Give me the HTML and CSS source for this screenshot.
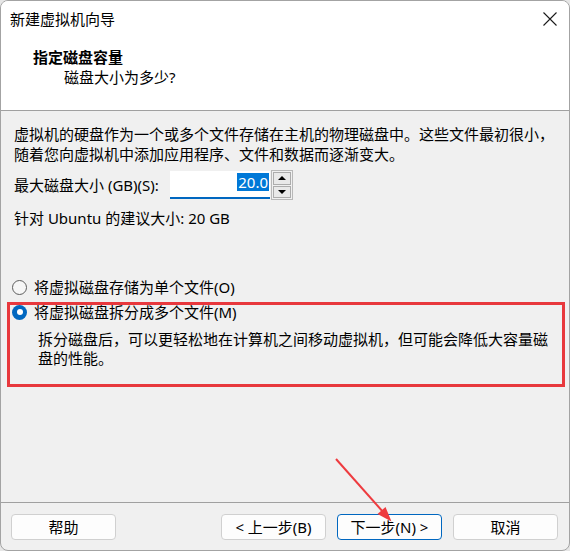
FILE: index.html
```html
<!DOCTYPE html>
<html lang="zh-CN">
<head>
<meta charset="utf-8">
<title>新建虚拟机向导</title>
<link rel="stylesheet" href="styles.css">
</head>
<body>
<div class="window">
  <div class="titlebar">
    <span class="title">新建虚拟机向导</span>
    <span class="close" aria-label="关闭">
      <svg width="16" height="16" viewBox="0 0 16 16"><path d="M1.5 1.5 L14.5 14.5 M14.5 1.5 L1.5 14.5" stroke="#1b1b1b" stroke-width="1.1" fill="none"/></svg>
    </span>
  </div>
  <div class="header">
    <div class="h-title">指定磁盘容量</div>
    <div class="h-sub">磁盘大小为多少?</div>
  </div>
  <div class="content">
    <p class="intro">
      <span>虚拟机的硬盘作为一个或多个文件存储在主机的物理磁盘中。这些文件最初很小，</span>
      <span>随着您向虚拟机中添加应用程序、文件和数据而逐渐变大。</span>
    </p>
    <div class="size-row">
      <span class="size-label">最大磁盘大小 (GB)(S):</span>
      <div class="field"><span class="sel">20.0</span></div>
      <div class="spinner">
        <span class="spin-btn"><span class="tri-up"></span></span>
        <span class="spin-btn"><span class="tri-down"></span></span>
      </div>
    </div>
    <p class="hint">针对 Ubuntu 的建议大小: 20 GB</p>
    <div class="options">
      <div class="option"><span class="radio"></span><span>将虚拟磁盘存储为单个文件(O)</span></div>
      <div class="option option-second"><span class="radio checked"></span><span>将虚拟磁盘拆分成多个文件(M)</span></div>
      <p class="option-desc">
        <span>拆分磁盘后，可以更轻松地在计算机之间移动虚拟机，但可能会降低大容量磁</span>
        <span>盘的性能。</span>
      </p>
    </div>
  </div>
  <div class="footer">
    <button class="btn">帮助</button>
    <div class="nav">
      <button class="btn">&lt; 上一步(B)</button>
      <button class="btn btn-default">下一步(N) &gt;</button>
      <button class="btn">取消</button>
    </div>
  </div>
  <div class="annot-box"></div>
  <svg class="annot-arrow" width="570" height="551" viewBox="0 0 570 551">
    <line x1="336" y1="459" x2="384" y2="513" stroke="#ee3b3f" stroke-width="2"/>
    <polygon points="391.5,521.5 377.5,514 385.5,507" fill="#ee3b3f"/>
  </svg>
</div>
</body>
</html>
```

FILE: styles.css
```css
* { box-sizing: border-box; }
html, body { margin: 0; padding: 0; }
body {
  background: #e6e6e6;
  font-family: "Noto Sans", "Noto Sans CJK SC", sans-serif;
  font-size: 15px;
  color: #000;
}
.window {
  position: relative;
  width: 570px;
  height: 551px;
  border: 1px solid #a3a3a3;
  border-radius: 8px;
  background: #f0f0f0;
  overflow: hidden;
  display: flex;
  flex-direction: column;
}
.titlebar {
  height: 35px;
  background: #fff;
  display: flex;
  align-items: center;
  justify-content: space-between;
  padding-left: 9px;
  padding-right: 11px;
}
.title { line-height: 20px; }
.close { display: flex; width: 16px; height: 16px; }
.header {
  height: 75px;
  background: #fff;
  border-bottom: 1px solid #a0a0a0;
  padding: 11px 0 0 32px;
}
.h-title { font-weight: 700; line-height: 20px; }
.h-sub { line-height: 21px; padding-left: 31px; }
.content {
  flex: 1;
  padding: 13px 0 0 13px;
}
.intro { margin: 0; line-height: 20px; }
.intro span, .option-desc span { display: block; white-space: nowrap; }
.size-row {
  margin-top: 6px;
  height: 30px;
  display: flex;
  align-items: center;
}
.size-label { width: 156px; line-height: 20px; }
.field {
  width: 100px;
  height: 28px;
  background: #fff;
  border-bottom: 2px solid #0067c0;
  display: flex;
  justify-content: flex-end;
  align-items: flex-start;
  padding: 2px 1px 0 0;
}
.sel {
  background: #0078d7;
  color: #fff;
  line-height: 18px;
  padding: 0 1px;
}
.spinner {
  width: 22px;
  height: 30px;
  margin-left: 1px;
  border: 1px solid #b8b8b8;
  padding: 1px;
  display: flex;
  flex-direction: column;
  gap: 1px;
  background: #f0f0f0;
}
.spin-btn {
  flex: 1;
  border: 1px solid #acacac;
  background: #e9e9e9;
  display: flex;
  align-items: center;
  justify-content: center;
}
.tri-up, .tri-down {
  width: 0; height: 0;
  border-left: 4px solid transparent;
  border-right: 4px solid transparent;
}
.tri-up { border-bottom: 4px solid #000; }
.tri-down { border-top: 4px solid #000; }
.hint { margin: 8px 0 0; line-height: 20px; }
.options { margin: 49px 0 0 -2px; }
.option {
  display: flex;
  align-items: center;
  gap: 7px;
  line-height: 20px;
}
.option-second { margin-top: 5px; }
.radio {
  width: 15px;
  height: 15px;
  border-radius: 50%;
  border: 1px solid #5d5d5d;
  background: #f6f6f6;
  flex: none;
}
.radio.checked {
  border: none;
  background: #0067c0;
  display: flex;
  align-items: center;
  justify-content: center;
}
.radio.checked::after {
  content: "";
  width: 6px;
  height: 6px;
  border-radius: 50%;
  background: #fff;
}
.option-desc {
  margin: 8px 0 0;
  padding-left: 26px;
  line-height: 19px;
}
.footer {
  height: 48px;
  border-top: 1px solid #a0a0a0;
  padding: 11px 11px 0 10px;
  display: flex;
  justify-content: space-between;
  align-items: flex-start;
}
.nav { display: flex; gap: 11px; }
.btn {
  width: 105px;
  height: 26px;
  background: #fdfdfd;
  border: 1px solid #d0d0d0;
  border-radius: 4px;
  font-family: inherit;
  font-size: 15px;
  color: #000;
  padding: 0;
  line-height: 22px;
}
.btn-default { border-color: #0067c0; }
.annot-box {
  position: absolute;
  left: 6px;
  top: 301px;
  width: 558px;
  height: 85px;
  border: 3px solid #e8383d;
}
.annot-arrow {
  position: absolute;
  left: -1px;
  top: -1px;
  pointer-events: none;
}
```
